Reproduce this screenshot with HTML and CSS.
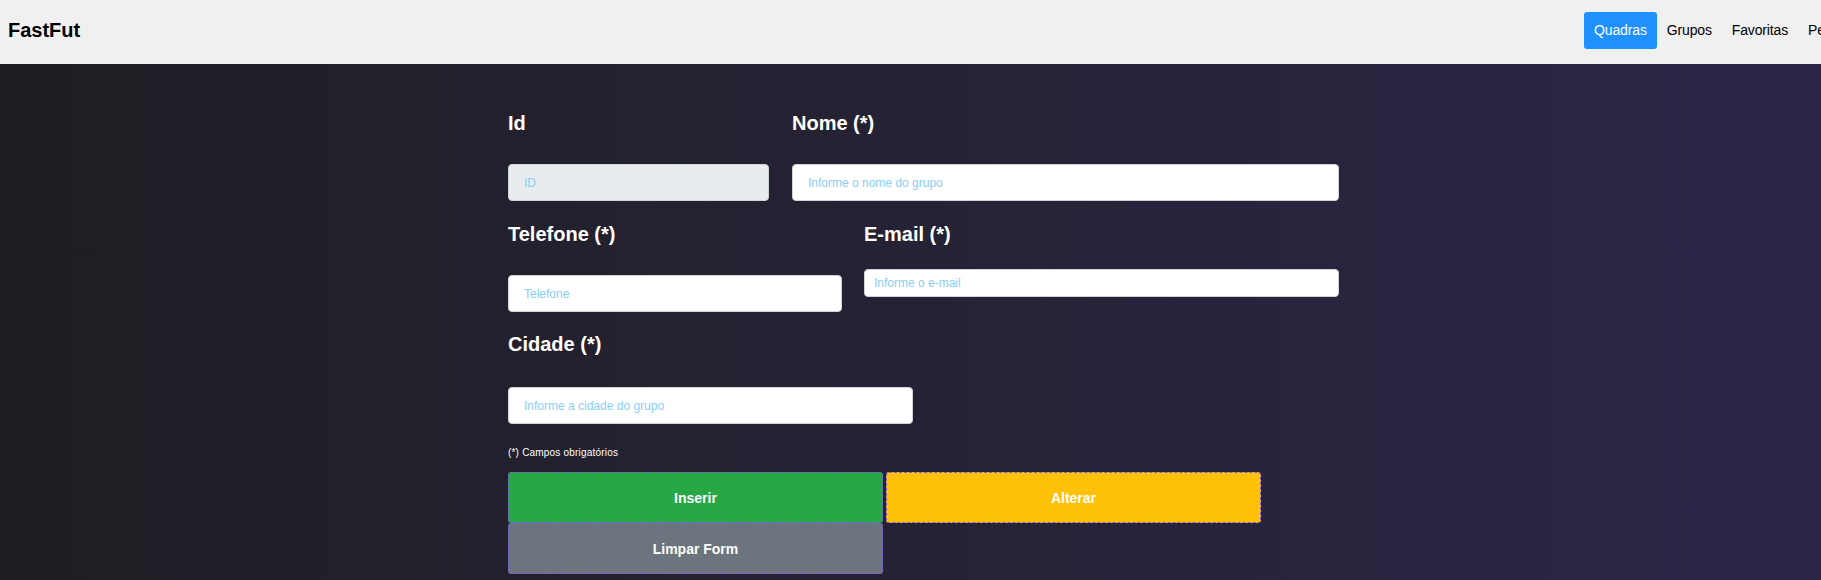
FILE: index.html
```html
<!DOCTYPE html>
<html lang="pt-BR">
<head>
<meta charset="utf-8">
<title>FastFut - Grupos</title>
<link rel="stylesheet" href="styles.css">
</head>
<body>
<header class="topbar">
  <div class="brand">FastFut</div>
  <nav class="nav">
    <a class="nav-link active" href="#">Quadras</a>
    <a class="nav-link" href="#">Grupos</a>
    <a class="nav-link" href="#">Favoritas</a>
    <a class="nav-link" href="#">Perfil</a>
  </nav>
</header>
<main class="page">
  <form class="form">
    <div class="row">
      <div class="field field-id">
        <label class="label">Id</label>
        <input class="input" type="text" placeholder="ID" disabled>
      </div>
      <div class="field field-nome">
        <label class="label">Nome (*)</label>
        <input class="input" type="text" placeholder="Informe o nome do grupo">
      </div>
    </div>
    <div class="row row-gap-sm">
      <div class="field field-tel">
        <label class="label">Telefone (*)</label>
        <input class="input" type="text" placeholder="Telefone">
      </div>
      <div class="field field-email">
        <label class="label label-email">E-mail (*)</label>
        <input class="input input-sm" type="email" placeholder="Informe o e-mail">
      </div>
    </div>
    <div class="row">
      <div class="field field-cidade">
        <label class="label label-cidade">Cidade (*)</label>
        <input class="input" type="text" placeholder="Informe a cidade do grupo">
      </div>
    </div>
    <p class="note">(*) Campos obrigatórios</p>
    <div class="actions">
      <button type="button" class="btn btn-green">Inserir</button>
      <button type="button" class="btn btn-yellow">Alterar</button>
      <button type="button" class="btn btn-gray">Limpar Form</button>
    </div>
  </form>
</main>
</body>
</html>
```
FILE: styles.css
```css
* { box-sizing: border-box; }

html, body {
  margin: 0;
  padding: 0;
  overflow-x: hidden;
}

body {
  font-family: "Liberation Sans", Arial, sans-serif;
  background: linear-gradient(to right, #1f1e23, #2d2648);
  min-height: 100vh;
}

.topbar {
  display: flex;
  align-items: center;
  width: calc(100% + 36px);
  height: 64px;
  padding: 12px 8px 15px 8px;
  background: #f0f0f0;
}

.brand {
  flex: 1 1 auto;
  font-size: 20px;
  font-weight: bold;
  line-height: 23px;
  color: #000;
}

.nav {
  display: flex;
  flex-shrink: 0;
}

.nav-link {
  display: block;
  padding: 10px;
  font-size: 14px;
  line-height: 17px;
  letter-spacing: -0.15px;
  color: #000;
  text-decoration: none;
  border-radius: 3px;
}

.nav-link.active {
  background: #1e90ff;
  color: #fff;
}

.page {
  padding-top: 48px;
}

.form {
  width: 857px;
  margin: 0 auto;
  padding-left: 26px;
}

.row {
  display: flex;
  align-items: flex-start;
  column-gap: 23px;
  margin-bottom: 22px;
}

.row-gap-sm {
  column-gap: 22px;
  margin-bottom: 21px;
}

.field-id { width: 261px; }
.field-nome { width: 547px; }
.field-tel { width: 334px; }
.field-email { width: 475px; }
.field-cidade { width: 405px; }

.label {
  display: block;
  font-size: 20px;
  font-weight: bold;
  line-height: 23px;
  color: #fff;
  margin-bottom: 29px;
}

.label-email { margin-bottom: 23px; }
.label-cidade { margin-bottom: 31px; }

.input {
  display: block;
  width: 100%;
  height: 37px;
  padding: 0 15px;
  font-family: "Liberation Sans", Arial, sans-serif;
  font-size: 12px;
  color: #333;
  background: #fff;
  border: 1px solid #ced4da;
  border-radius: 4px;
  outline: none;
}

.input:disabled {
  background: #e9ecef;
}

.input-sm {
  height: 28px;
  padding: 0 9px;
}

.input::placeholder {
  color: #87cefa;
  opacity: 1;
}

.note {
  margin: 23px 0 13px 0;
  font-size: 10px;
  line-height: 12px;
  letter-spacing: 0.2px;
  color: #fff;
}

.actions {
  display: flex;
  flex-wrap: wrap;
  column-gap: 3px;
  width: 753px;
}

.btn {
  width: 375px;
  height: 51px;
  padding: 0;
  font-family: "Liberation Sans", Arial, sans-serif;
  font-size: 14px;
  font-weight: bold;
  color: #fff;
  border: 1px dashed #7b61d9;
  border-radius: 3px;
  cursor: pointer;
}

.btn-green { background: #28a745; }
.btn-yellow { background: #ffc107; }
.btn-gray { background: #6c757d; }
```
